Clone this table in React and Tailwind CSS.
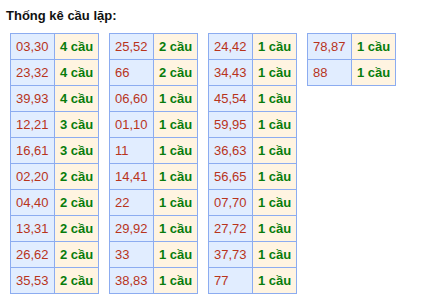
const tables = [
  [["03,30", 4], ["23,32", 4], ["39,93", 4], ["12,21", 3], ["16,61", 3], ["02,20", 2], ["04,40", 2], ["13,31", 2], ["26,62", 2], ["35,53", 2]],
  [["25,52", 2], ["66", 2], ["06,60", 1], ["01,10", 1], ["11", 1], ["14,41", 1], ["22", 1], ["29,92", 1], ["33", 1], ["38,83", 1]],
  [["24,42", 1], ["34,43", 1], ["45,54", 1], ["59,95", 1], ["36,63", 1], ["56,65", 1], ["07,70", 1], ["27,72", 1], ["37,73", 1], ["77", 1]],
  [["78,87", 1], ["88", 1]],
];

export default function App() {
  return (
    <div className="w-[425px] h-[303px] bg-white font-['Liberation_Sans',Arial,sans-serif]">
      <div className="pl-[6px] pt-[7px] pb-[9px] text-[13px] leading-[17px] font-bold text-[#111]">
        Thống kê cầu lặp:
      </div>
      <div className="flex items-start gap-[10px] pl-[10px]">
        {tables.map((rows, i) => (
          <div key={i} className="border-l border-t border-[#8cacf0]">
            {rows.map(([pair, count]) => (
              <div key={pair} className="flex">
                <div className="w-[44px] h-[26px] border-r border-b border-[#8cacf0] bg-[#e1edff] pl-[5px] flex items-center text-[13px] text-[#b8341c]">
                  {pair}
                </div>
                <div className="w-[44px] h-[26px] border-r border-b border-[#8cacf0] bg-[#fff4e1] pl-[5px] flex items-center text-[13px] font-bold text-[#087c0c]">
                  {count} cầu
                </div>
              </div>
            ))}
          </div>
        ))}
      </div>
    </div>
  );
}
